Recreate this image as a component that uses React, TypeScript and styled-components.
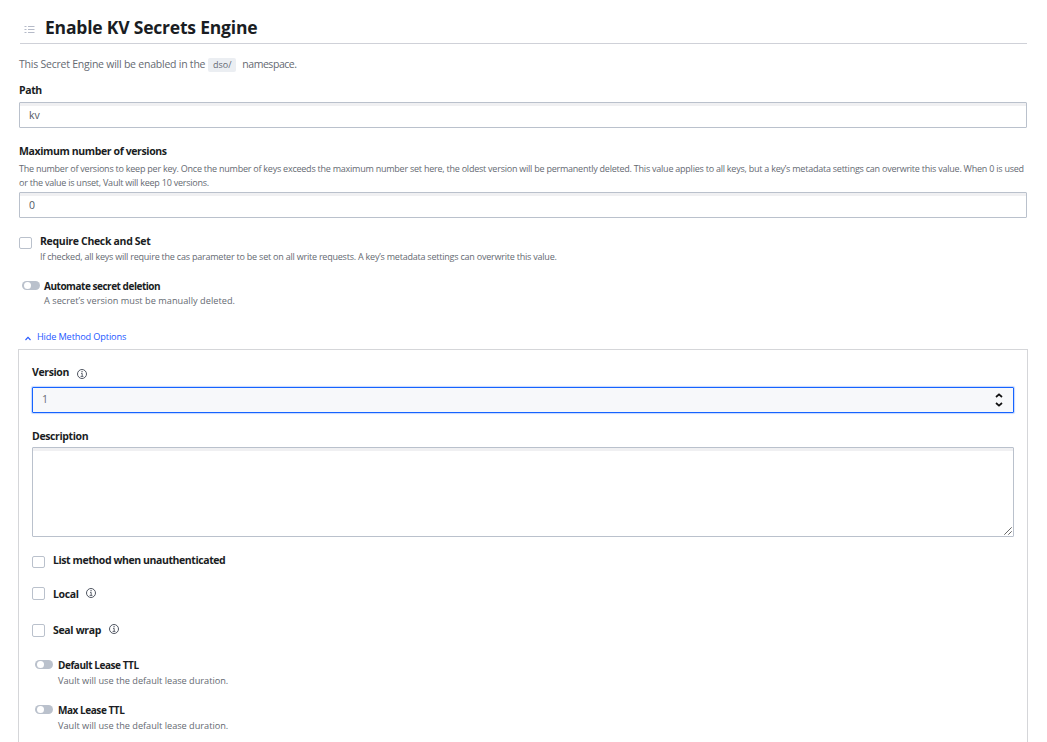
import React from "react";
import styled, { createGlobalStyle } from "styled-components";

const GlobalStyle = createGlobalStyle`
  * { box-sizing: border-box; }
  body {
    margin: 0;
    background: #fff;
    overflow: hidden;
    font-family: "Segoe UI", "Open Sans", "Noto Sans", sans-serif;
    color: #1a1d23;
  }
`;

const Page = styled.main`
  display: flex;
  flex-direction: column;
  height: 742px;
  padding: 0 20px 0 19px;
  overflow: hidden;
`;

const Header = styled.header`
  display: flex;
  align-items: flex-start;
  flex: none;
  height: 44px;
  margin-left: 1px;
  padding: 14px 0 0 4px;
  border-bottom: 1px solid #cfd1d8;

  svg { margin: 11px 10px 0 0; }
`;

const Title = styled.h1`
  margin: 0;
  font-size: 17.5px;
  line-height: 26px;
  font-weight: 700;
  letter-spacing: -0.2px;
  white-space: nowrap;
`;

const Intro = styled.p`
  display: flex;
  flex: none;
  height: 20px;
  margin: 10px 0 0;
  font-size: 10.5px;
  line-height: 20px;
  letter-spacing: -0.23px;
  color: #656a72;
  white-space: nowrap;

  span:last-child { letter-spacing: -0.45px; }
`;

const Chip = styled.code`
  width: 28px;
  height: 14px;
  margin: 4px 6px 0 3px;
  border-radius: 2px;
  background: #ebeef2;
  font-family: inherit;
  font-size: 9px;
  line-height: 14px;
  letter-spacing: 0;
  text-align: center;
`;

const Label = styled.label<{ $top?: number; $spacing?: number; $size?: number }>`
  display: block;
  flex: none;
  height: 18px;
  margin-top: ${(p) => p.$top ?? 0}px;
  font-size: ${(p) => p.$size ?? 10.5}px;
  line-height: 18px;
  font-weight: 700;
  letter-spacing: ${(p) => p.$spacing ?? -0.38}px;
  white-space: nowrap;
`;

const Help = styled.p<{ $spacing?: number; $size?: number; $top?: number }>`
  flex: none;
  margin: ${(p) => p.$top ?? 0}px 0 0;
  font-size: ${(p) => p.$size ?? 9}px;
  line-height: 14px;
  letter-spacing: ${(p) => p.$spacing ?? -0.22}px;
  color: #656a72;
  white-space: nowrap;
`;

const Field = styled.input<{ $top: number }>`
  display: block;
  flex: none;
  width: 100%;
  height: 26px;
  margin: ${(p) => p.$top}px 0 0;
  padding: 0 9px;
  border: 1px solid #bac1cc;
  border-radius: 1px;
  outline: none;
  background: #fff;
  box-shadow: inset 0 3px 0 #f0f0f2;
  font-family: inherit;
  font-size: 10.5px;
  color: #525965;
`;

const NumberBox = styled.div`
  display: flex;
  align-items: center;
  justify-content: space-between;
  height: 26px;
  margin-top: 6px;
  padding: 0 10px 2px 9px;
  border: 1px solid #1563ff;
  border-radius: 1px;
  box-shadow: 0 0 1px 1px #c5d8ff;
  background: #f7f8fa;
  font-size: 10.5px;
  color: #656a72;

  svg { margin: 2px 0 0; }
`;

const DescriptionBox = styled.div`
  display: flex;
  align-items: flex-end;
  justify-content: flex-end;
  height: 90px;
  margin-top: 2px;
  padding: 0 1px 1px 0;
  border: 1px solid #bac1cc;
  border-radius: 1px;
  box-shadow: inset 0 3px 0 #f0f0f2;
`;

const Option = styled.div<{ $top: number; $height: number; $gap?: number; $left?: number }>`
  display: flex;
  flex: none;
  align-items: flex-start;
  gap: ${(p) => p.$gap ?? 8}px;
  height: ${(p) => p.$height}px;
  margin: ${(p) => p.$top}px 0 0 ${(p) => p.$left ?? 0}px;
`;

const OptionText = styled.div`
  display: flex;
  flex-direction: column;
`;

const CheckBox = styled.span<{ $top: number; $height?: number }>`
  flex: none;
  width: 13px;
  height: ${(p) => p.$height ?? 13}px;
  margin-top: ${(p) => p.$top}px;
  border: 1px solid #bac1cc;
  border-radius: 2px;
  background: #fff;
`;

const Switch = styled.span`
  display: flex;
  align-items: center;
  flex: none;
  width: 18px;
  height: 9px;
  margin-top: 4px;
  padding-left: 2px;
  border-radius: 5px;
  background: #bac1cc;

  &::before {
    content: "";
    width: 7px;
    height: 7px;
    border-radius: 50%;
    background: #fff;
  }
`;

const OptionsLink = styled.button`
  display: flex;
  align-items: center;
  flex: none;
  height: 18px;
  margin: 19px 0 0;
  padding: 0 0 0 6px;
  border: 0;
  background: none;
  font-family: inherit;
  font-size: 9.2px;
  line-height: 18px;
  letter-spacing: -0.15px;
  color: #2457ff;

  svg { margin: 3px 6px 0 0; }
`;

const Panel = styled.section`
  flex: none;
  height: 420px;
  margin: 3px -1px 0;
  padding: 13px 13px 0;
  border: 1px solid #d5d6d9;
`;

const LabelRow = styled.div<{ $iconTop?: number }>`
  display: flex;
  align-items: flex-start;
  gap: 8px;
  height: 18px;

  svg { margin-top: ${(p) => p.$iconTop ?? 3}px; }
`;

const Info = () => (
  <svg width="10" height="10" viewBox="0 0 10 10" fill="none" stroke="#4f5561">
    <circle cx="5" cy="5" r="4.5" strokeWidth="1" />
    <path d="M4 4.4h1.2V7.4M3.6 7.4h2.8" strokeWidth="0.9" />
    <path d="M4.5 2.6h1.1" strokeWidth="1.1" />
  </svg>
);

const ListIcon = () => (
  <svg width="11" height="9" viewBox="0 0 11 9" stroke="#b5bac8">
    <path d="M0.5 1.5h2M0.5 4.5h2M0.5 7.5h2M4 1.5h6.5M4 4.5h6.5M4 7.5h6.5" />
  </svg>
);

const ChevronUp = () => (
  <svg width="6" height="5" viewBox="0 0 6 5" fill="none" stroke="#2457ff">
    <path d="M0.5 4L3 1.4L5.5 4" strokeWidth="1.1" />
  </svg>
);

const Stepper = () => (
  <svg width="8" height="14" viewBox="0 0 8 14" fill="none" stroke="#111" strokeWidth="1.7">
    <path d="M1 4L4 1.3L7 4M1 10L4 12.7L7 10" />
  </svg>
);

const ResizeGrip = () => (
  <svg width="8" height="8" viewBox="0 0 8 8" stroke="#555" strokeWidth="0.9">
    <path d="M0.3 7.7L7.7 0.3M4.3 7.7L7.7 4.3" />
  </svg>
);

const ttls = [
  { name: "Default Lease TTL", top: 17 },
  { name: "Max Lease TTL", top: 11 },
];

export default function App() {
  return (
    <>
      <GlobalStyle />
      <Page>
        <Header>
          <ListIcon />
          <Title>Enable KV Secrets Engine</Title>
        </Header>
        <Intro>
          <span>This Secret Engine will be enabled in the</span>
          <Chip>dso/</Chip>
          <span>namespace.</span>
        </Intro>

        <Label $top={7}>Path</Label>
        <Field $top={3} defaultValue="kv" />

        <Label $top={14}>Maximum number of versions</Label>
        <Help $top={2} $spacing={-0.235}>
          The number of versions to keep per key. Once the number of keys exceeds the maximum number set here, the
          oldest version will be permanently deleted. This value applies to all keys, but a key’s metadata settings
          can overwrite this value. When 0 is used
          <br />
          or the value is unset, Vault will keep 10 versions.
        </Help>
        <Field $top={2} defaultValue="0" />

        <Option $top={14} $height={32}>
          <CheckBox $top={5} $height={12} />
          <OptionText>
            <Label $spacing={-0.32}>Require Check and Set</Label>
            <Help>
              If checked, all keys will require the cas parameter to be set on all write requests. A key’s metadata
              settings can overwrite this value.
            </Help>
          </OptionText>
        </Option>

        <Option $top={13} $height={32} $gap={4} $left={3}>
          <Switch />
          <OptionText>
            <Label $size={10} $spacing={-0.47}>Automate secret deletion</Label>
            <Help $size={9.2} $spacing={0.02} $top={-1}>A secret’s version must be manually deleted.</Help>
          </OptionText>
        </Option>

        <OptionsLink>
          <ChevronUp />
          Hide Method Options
        </OptionsLink>

        <Panel>
          <LabelRow $iconTop={6}>
            <Label>Version</Label>
            <Info />
          </LabelRow>
          <NumberBox>
            <span>1</span>
            <Stepper />
          </NumberBox>
          <Label $top={14}>Description</Label>
          <DescriptionBox>
            <ResizeGrip />
          </DescriptionBox>

          <Option $top={14} $height={18}>
            <CheckBox $top={5} $height={12} />
            <Label $spacing={-0.42}>List method when unauthenticated</Label>
          </Option>
          <Option $top={16} $height={18}>
            <CheckBox $top={2} />
            <LabelRow>
              <Label>Local</Label>
              <Info />
            </LabelRow>
          </Option>
          <Option $top={18} $height={18}>
            <CheckBox $top={3} />
            <LabelRow>
              <Label $spacing={-0.32}>Seal wrap</Label>
              <Info />
            </LabelRow>
          </Option>

          {ttls.map((ttl) => (
            <Option key={ttl.name} $top={ttl.top} $height={34} $gap={5} $left={3}>
              <Switch />
              <OptionText>
                <Label $size={10} $spacing={-0.44}>{ttl.name}</Label>
                <Help $size={9.2} $spacing={-0.02}>Vault will use the default lease duration.</Help>
              </OptionText>
            </Option>
          ))}
        </Panel>
      </Page>
    </>
  );
}
